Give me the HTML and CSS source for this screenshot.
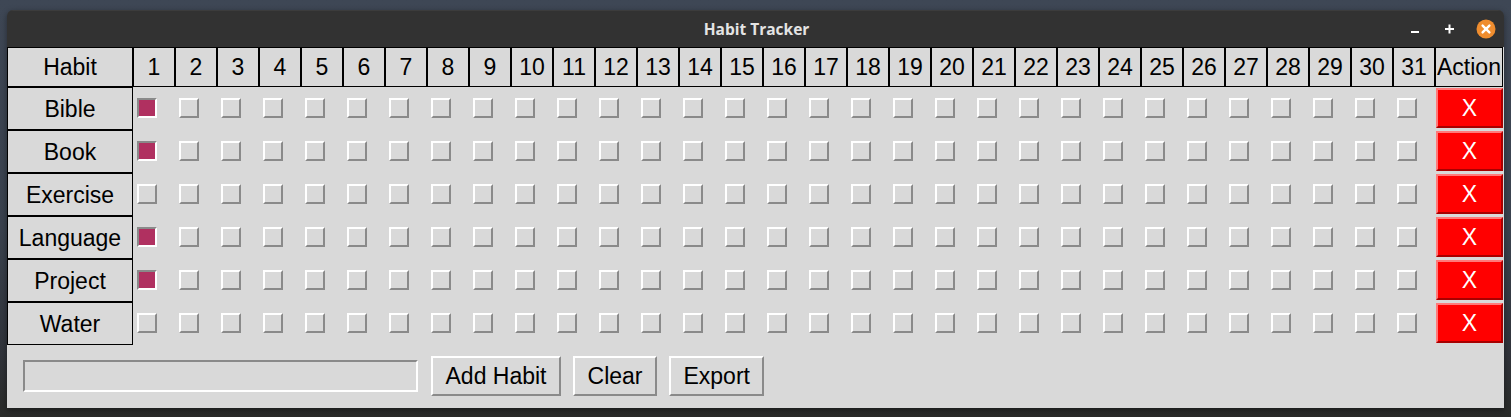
FILE: index.html
```html
<!DOCTYPE html>
<html>
<head>
<meta charset="utf-8">
<title>Habit Tracker</title>
<link rel="stylesheet" href="styles.css">
</head>
<body>
<div class="desktop">
  <div class="window">
    <div class="titlebar">
      <span class="title">Habit Tracker</span>
      <div class="controls">
        <svg class="ctl" width="14" height="14" viewBox="0 0 14 14"><rect x="3" y="8" width="8" height="2" fill="#fff"/></svg>
        <svg class="ctl" width="14" height="14" viewBox="0 0 14 14"><rect x="3" y="6" width="9" height="2" fill="#fff"/><rect x="6.5" y="2.5" width="2" height="9" fill="#fff"/></svg>
        <svg class="ctl close" width="20" height="20" viewBox="0 0 20 20"><circle cx="10" cy="10" r="9.5" fill="#ef8d2f"/><path d="M6.6 6.6 L13.4 13.4 M13.4 6.6 L6.6 13.4" stroke="#fff" stroke-width="2.4" stroke-linecap="round"/></svg>
      </div>
    </div>
    <div class="content">
      <div class="grid">
        <div class="hd">Habit</div>
        <div class="hd">1</div><div class="hd">2</div><div class="hd">3</div><div class="hd">4</div><div class="hd">5</div><div class="hd">6</div><div class="hd">7</div><div class="hd">8</div><div class="hd">9</div><div class="hd">10</div><div class="hd">11</div><div class="hd">12</div><div class="hd">13</div><div class="hd">14</div><div class="hd">15</div><div class="hd">16</div><div class="hd">17</div><div class="hd">18</div><div class="hd">19</div><div class="hd">20</div><div class="hd">21</div><div class="hd">22</div><div class="hd">23</div><div class="hd">24</div><div class="hd">25</div><div class="hd">26</div><div class="hd">27</div><div class="hd">28</div><div class="hd">29</div><div class="hd">30</div><div class="hd">31</div>
        <div class="hd">Action</div>

        <div class="name">Bible</div>
        <i class="cb on"></i><i class="cb"></i><i class="cb"></i><i class="cb"></i><i class="cb"></i><i class="cb"></i><i class="cb"></i><i class="cb"></i><i class="cb"></i><i class="cb"></i><i class="cb"></i><i class="cb"></i><i class="cb"></i><i class="cb"></i><i class="cb"></i><i class="cb"></i><i class="cb"></i><i class="cb"></i><i class="cb"></i><i class="cb"></i><i class="cb"></i><i class="cb"></i><i class="cb"></i><i class="cb"></i><i class="cb"></i><i class="cb"></i><i class="cb"></i><i class="cb"></i><i class="cb"></i><i class="cb"></i><i class="cb"></i>
        <button class="del">X</button>

        <div class="name">Book</div>
        <i class="cb on"></i><i class="cb"></i><i class="cb"></i><i class="cb"></i><i class="cb"></i><i class="cb"></i><i class="cb"></i><i class="cb"></i><i class="cb"></i><i class="cb"></i><i class="cb"></i><i class="cb"></i><i class="cb"></i><i class="cb"></i><i class="cb"></i><i class="cb"></i><i class="cb"></i><i class="cb"></i><i class="cb"></i><i class="cb"></i><i class="cb"></i><i class="cb"></i><i class="cb"></i><i class="cb"></i><i class="cb"></i><i class="cb"></i><i class="cb"></i><i class="cb"></i><i class="cb"></i><i class="cb"></i><i class="cb"></i>
        <button class="del">X</button>

        <div class="name">Exercise</div>
        <i class="cb"></i><i class="cb"></i><i class="cb"></i><i class="cb"></i><i class="cb"></i><i class="cb"></i><i class="cb"></i><i class="cb"></i><i class="cb"></i><i class="cb"></i><i class="cb"></i><i class="cb"></i><i class="cb"></i><i class="cb"></i><i class="cb"></i><i class="cb"></i><i class="cb"></i><i class="cb"></i><i class="cb"></i><i class="cb"></i><i class="cb"></i><i class="cb"></i><i class="cb"></i><i class="cb"></i><i class="cb"></i><i class="cb"></i><i class="cb"></i><i class="cb"></i><i class="cb"></i><i class="cb"></i><i class="cb"></i>
        <button class="del">X</button>

        <div class="name">Language</div>
        <i class="cb on"></i><i class="cb"></i><i class="cb"></i><i class="cb"></i><i class="cb"></i><i class="cb"></i><i class="cb"></i><i class="cb"></i><i class="cb"></i><i class="cb"></i><i class="cb"></i><i class="cb"></i><i class="cb"></i><i class="cb"></i><i class="cb"></i><i class="cb"></i><i class="cb"></i><i class="cb"></i><i class="cb"></i><i class="cb"></i><i class="cb"></i><i class="cb"></i><i class="cb"></i><i class="cb"></i><i class="cb"></i><i class="cb"></i><i class="cb"></i><i class="cb"></i><i class="cb"></i><i class="cb"></i><i class="cb"></i>
        <button class="del">X</button>

        <div class="name">Project</div>
        <i class="cb on"></i><i class="cb"></i><i class="cb"></i><i class="cb"></i><i class="cb"></i><i class="cb"></i><i class="cb"></i><i class="cb"></i><i class="cb"></i><i class="cb"></i><i class="cb"></i><i class="cb"></i><i class="cb"></i><i class="cb"></i><i class="cb"></i><i class="cb"></i><i class="cb"></i><i class="cb"></i><i class="cb"></i><i class="cb"></i><i class="cb"></i><i class="cb"></i><i class="cb"></i><i class="cb"></i><i class="cb"></i><i class="cb"></i><i class="cb"></i><i class="cb"></i><i class="cb"></i><i class="cb"></i><i class="cb"></i>
        <button class="del">X</button>

        <div class="name">Water</div>
        <i class="cb"></i><i class="cb"></i><i class="cb"></i><i class="cb"></i><i class="cb"></i><i class="cb"></i><i class="cb"></i><i class="cb"></i><i class="cb"></i><i class="cb"></i><i class="cb"></i><i class="cb"></i><i class="cb"></i><i class="cb"></i><i class="cb"></i><i class="cb"></i><i class="cb"></i><i class="cb"></i><i class="cb"></i><i class="cb"></i><i class="cb"></i><i class="cb"></i><i class="cb"></i><i class="cb"></i><i class="cb"></i><i class="cb"></i><i class="cb"></i><i class="cb"></i><i class="cb"></i><i class="cb"></i><i class="cb"></i>
        <button class="del">X</button>
      </div>
      <div class="footer">
        <input class="entry" type="text">
        <button class="btn">Add Habit</button>
        <button class="btn">Clear</button>
        <button class="btn">Export</button>
      </div>
    </div>
  </div>
</div>
</body>
</html>
```

FILE: styles.css
```css
html, body {
  margin: 0;
  padding: 0;
}
body {
  width: 1511px;
  height: 417px;
  overflow: hidden;
  font-family: "Liberation Sans", Arial, sans-serif;
}
.desktop {
  height: 417px;
  box-sizing: border-box;
  padding: 10px 0 0 7px;
  background: linear-gradient(to bottom, #3e4755 0%, #3a424e 55%, #30333a 85%, #2a2b29 100%);
}
.window {
  width: 1497px;
  border-radius: 6px 6px 0 0;
  overflow: hidden;
  box-shadow: 0 2px 6px rgba(0,0,0,0.4);
}
.titlebar {
  height: 37px;
  background: #323232;
  border-top: 1px solid #3c3c3c;
  box-sizing: border-box;
  display: flex;
  align-items: center;
  justify-content: center;
  position: relative;
}
.title {
  color: #e4e4e4;
  font-family: "Open Sans", "Noto Sans", sans-serif;
  font-weight: 700;
  font-size: 15.5px;
  margin-left: 2px;
}
.controls {
  position: absolute;
  right: 8px;
  top: 8px;
  display: flex;
  align-items: center;
  gap: 20px;
}
.ctl {
  display: block;
}
.controls .ctl:first-child {
  margin-top: 2px;
}
.content {
  background: #d9d9d9;
  height: 361px;
}
.grid {
  display: grid;
  grid-template-columns: 126px repeat(31, 42px) 68px;
  grid-template-rows: 40px repeat(6, 43px);
}
.hd, .name {
  box-sizing: border-box;
  border: 1px solid #000;
  display: flex;
  align-items: center;
  justify-content: center;
  font-size: 23px;
  color: #000;
}
.name {
  padding-top: 1px;
}
.cb {
  display: block;
  width: 20px;
  height: 20px;
  box-sizing: border-box;
  border: 2px solid;
  border-color: #ffffff #8a8a8a #8a8a8a #ffffff;
  background: #d9d9d9;
  align-self: center;
  margin-left: 4px;
  margin-top: -1px;
}
.cb.on {
  background: #b03060;
  border-color: #8a8a8a #ffffff #ffffff #8a8a8a;
}
.del {
  margin: 1px 0 2px 1px;
  height: 40px;
  box-sizing: border-box;
  border: 2px solid;
  border-color: #ff7a7a #a80000 #a80000 #ff7a7a;
  background: #ff0000;
  color: #ffffff;
  font-family: "Liberation Sans", Arial, sans-serif;
  font-size: 23px;
  padding: 0;
}
.footer {
  display: flex;
  align-items: center;
  padding: 11px 0 0 16px;
  gap: 12px;
}
.entry {
  width: 395px;
  height: 32px;
  box-sizing: border-box;
  border: 2px solid;
  border-color: #8a8a8a #ffffff #ffffff #8a8a8a;
  background: #d9d9d9;
  margin: 0 1px 0 0;
  padding: 0;
  outline: none;
}
.btn {
  height: 40px;
  box-sizing: border-box;
  border: 2px solid;
  border-color: #ffffff #8a8a8a #8a8a8a #ffffff;
  background: #d9d9d9;
  color: #000;
  font-family: "Liberation Sans", Arial, sans-serif;
  font-size: 23px;
  padding: 0 12.5px;
}
```
